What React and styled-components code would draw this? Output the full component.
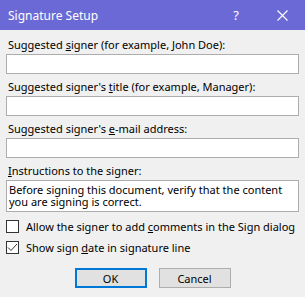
import React from 'react';
import styled, { createGlobalStyle } from 'styled-components';

const GlobalStyle = createGlobalStyle`
  html, body {
    margin: 0;
    padding: 0;
    background: #f0f0f0;
  }
  body {
    font-family: 'Noto Sans', 'Open Sans', sans-serif;
    font-size: 11px;
    color: #000;
  }
`;

const fields = [
  { before: 'Suggested ', key: 's', after: 'igner (for example, John Doe):' },
  { before: "Suggested signer's ", key: 't', after: 'itle (for example, Manager):' },
  { before: "Suggested signer's ", key: 'e', after: '-mail address:' },
];

function App() {
  return (
    <>
      <GlobalStyle />
      <Dialog>
        <TitleBar>
          <Title>Signature Setup</Title>
          <TitleButton>?</TitleButton>
          <TitleButton>
            <svg width="11" height="11" viewBox="0 0 11 11">
              <path d="M0.5 0.5 L10.5 10.5 M10.5 0.5 L0.5 10.5" stroke="#fff" strokeWidth="1.1" />
            </svg>
          </TitleButton>
        </TitleBar>

        <Body>
          {fields.map(f => (
            <Field key={f.key}>
              <Label>
                {f.before}<u>{f.key}</u>{f.after}
              </Label>
              <Input />
            </Field>
          ))}

          <Field $last>
            <Label><u>I</u>nstructions to the signer:</Label>
            <TextArea>
              Before signing this document, verify that the content you are signing is correct.
            </TextArea>
          </Field>

          <CheckRow>
            <CheckBox />
            <span>Allow the signer to add <u>c</u>omments in the Sign dialog</span>
          </CheckRow>
          <CheckRow>
            <CheckBox>
              <svg width="11" height="11" viewBox="0 0 11 11">
                <path d="M1 5.5 L4 8.5 L10 2" fill="none" stroke="#333" strokeWidth="1" />
              </svg>
            </CheckBox>
            <span>Show sign <u>d</u>ate in signature line</span>
          </CheckRow>

          <Buttons>
            <Button $primary>OK</Button>
            <Button>Cancel</Button>
          </Buttons>
        </Body>
      </Dialog>
    </>
  );
}

// --- Стили ---
const Dialog = styled.div`
  width: 305px;
  height: 297px;
  display: flex;
  flex-direction: column;
  background: #f0f0f0;
`;

const TitleBar = styled.div`
  height: 30px;
  background: #6b69d6;
  display: flex;
  align-items: center;
  color: #fff;
  flex-shrink: 0;
`;

const Title = styled.div`
  flex: 1;
  padding-left: 8px;
  font-size: 12px;
`;

const TitleButton = styled.div`
  width: 46px;
  height: 30px;
  display: flex;
  align-items: center;
  justify-content: center;
  font-size: 13px;
`;

const Body = styled.div`
  padding: 7px 6px 0;
  display: flex;
  flex-direction: column;
`;

const Field = styled.div`
  display: flex;
  flex-direction: column;
  margin-bottom: ${({ $last }) => ($last ? '4px' : '5px')};
`;

const Label = styled.div`
  line-height: 16px;
  margin-bottom: 1px;
  padding-left: 2px;
  white-space: nowrap;
`;

const Input = styled.div`
  height: 18px;
  background: #fff;
  border: 1px solid #adadad;
`;

const TextArea = styled.div`
  box-sizing: border-box;
  height: 32px;
  background: #fff;
  border: 1px solid #adadad;
  padding: 3px 2px 0;
  line-height: 12px;
`;

const CheckRow = styled.div`
  display: flex;
  align-items: center;
  gap: 7px;
  height: 21px;
  white-space: nowrap;
`;

const CheckBox = styled.div`
  width: 11px;
  height: 11px;
  border: 1px solid #333;
  background: #fff;
  display: flex;
  align-items: center;
  justify-content: center;
  flex-shrink: 0;
`;

const Buttons = styled.div`
  display: flex;
  justify-content: center;
  gap: 12px;
  margin-top: 10px;
`;

const Button = styled.div`
  width: 72px;
  height: 20px;
  box-sizing: border-box;
  display: flex;
  align-items: center;
  justify-content: center;
  background: #e1e1e1;
  border: ${({ $primary }) => ($primary ? '2px solid #0078d7' : '1px solid #adadad')};
`;

export default App;
